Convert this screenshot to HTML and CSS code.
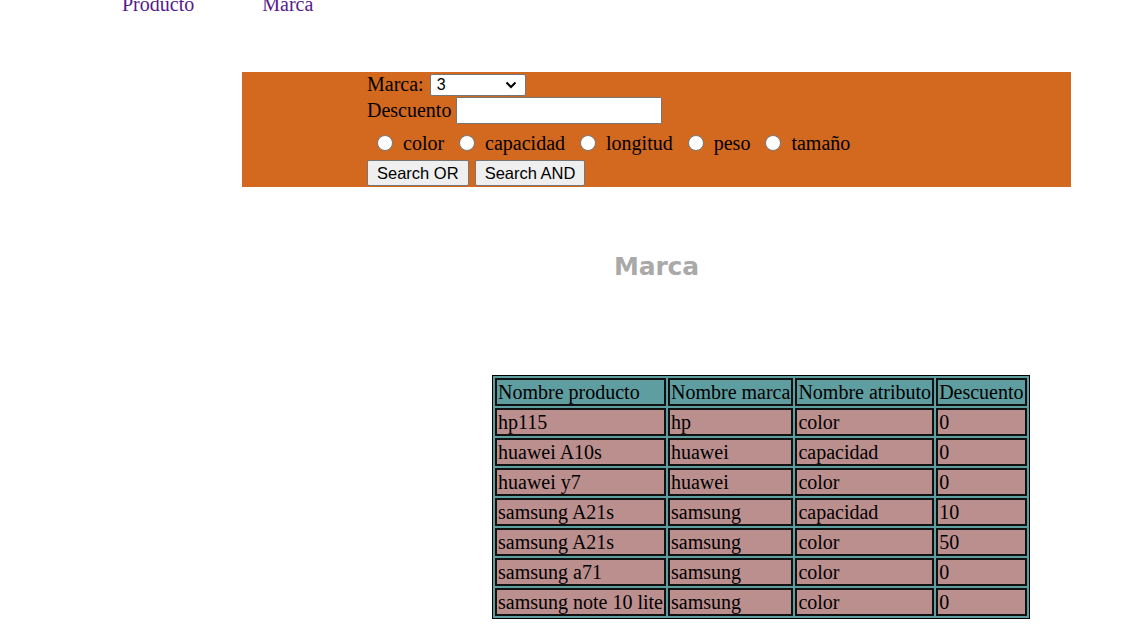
FILE: index.html
```html
<!DOCTYPE html>
<html>
<head>
<meta charset="utf-8">
<link rel="stylesheet" href="styles.css">
</head>
<body>
<nav class="nav">
  <a class="nav-link" href="#">Producto</a>
  <a class="nav-link nav-link-2" href="#">Marca</a>
</nav>
<main class="main">
  <form class="filter">
    <div class="row row-marca">
      <label class="lbl">Marca:</label>
      <div class="select"><span>3</span><svg width="12" height="8" viewBox="0 0 12 8"><path d="M1.5 1.5 L6 6 L10.5 1.5" fill="none" stroke="#000" stroke-width="2"/></svg></div>
    </div>
    <div class="row row-desc">
      <label class="lbl">Descuento</label>
      <div class="input"></div>
    </div>
    <div class="row row-radios">
      <span class="radio radio-first"></span><span class="rlabel">color</span>
      <span class="radio"></span><span class="rlabel">capacidad</span>
      <span class="radio"></span><span class="rlabel">longitud</span>
      <span class="radio"></span><span class="rlabel">peso</span>
      <span class="radio"></span><span class="rlabel">tamaño</span>
    </div>
    <div class="row row-btns">
      <button type="button" class="btn btn-or">Search OR</button>
      <button type="button" class="btn btn-and">Search AND</button>
    </div>
  </form>
  <h2 class="title">Marca</h2>
  <table class="tbl">
    <tr class="head"><th>Nombre producto</th><th>Nombre marca</th><th>Nombre atributo</th><th>Descuento</th></tr>
    <tr><td>hp115</td><td>hp</td><td>color</td><td>0</td></tr>
    <tr><td>huawei A10s</td><td>huawei</td><td>capacidad</td><td>0</td></tr>
    <tr><td>huawei y7</td><td>huawei</td><td>color</td><td>0</td></tr>
    <tr><td>samsung A21s</td><td>samsung</td><td>capacidad</td><td>10</td></tr>
    <tr><td>samsung A21s</td><td>samsung</td><td>color</td><td>50</td></tr>
    <tr><td>samsung a71</td><td>samsung</td><td>color</td><td>0</td></tr>
    <tr><td>samsung note 10 lite</td><td>samsung</td><td>color</td><td>0</td></tr>
  </table>
</main>
</body>
</html>
```
FILE: styles.css
```css
html, body {
  margin: 0;
  padding: 0;
  background: #fff;
}
body {
  font-family: "Liberation Serif", "Times New Roman", serif;
  font-size: 20px;
  color: #000;
  overflow: hidden;
}
.nav {
  display: flex;
  margin-top: -7px;
  padding-left: 122px;
  height: 23px;
  line-height: 23px;
}
.nav-link {
  color: #551a8b;
  text-decoration: none;
}
.nav-link-2 {
  margin-left: 68px;
}
.main {
  margin: 56px 50px 0 242px;
}
.filter {
  background: #d2691e;
  padding-left: 125px;
  height: 115px;
  display: flex;
  flex-direction: column;
}
.row {
  display: flex;
  align-items: center;
}
.row-marca {
  height: 24px;
}
.row-marca .lbl {
  margin-right: 6px;
}
.select {
  box-sizing: border-box;
  width: 96px;
  height: 22px;
  margin-top: 2px;
  background: #fff;
  border: 1px solid #767676;
  border-radius: 2px;
  display: flex;
  align-items: center;
  justify-content: space-between;
  padding: 0 8px 0 6px;
  font-family: "Liberation Sans", Arial, sans-serif;
  font-size: 16px;
}
.row-desc {
  height: 28px;
}
.row-desc .lbl {
  margin-right: 5px;
}
.input {
  box-sizing: border-box;
  width: 206px;
  height: 27px;
  background: #fff;
  border: 1px solid #767676;
  border-radius: 1px;
}
.row-radios {
  height: 36px;
  padding-top: 2px;
  box-sizing: border-box;
}
.radio {
  box-sizing: border-box;
  width: 16px;
  height: 16px;
  border-radius: 50%;
  background: #fff;
  border: 1px solid #767676;
  margin: 0 10px 0 15px;
}
.radio-first {
  margin-left: 10px;
}
.row-btns {
  height: 27px;
  align-items: flex-start;
}
.btn {
  box-sizing: border-box;
  height: 26px;
  font-family: "Liberation Sans", Arial, sans-serif;
  font-size: 16.5px;
  color: #000;
  background: #efefef;
  border: 1px solid #767676;
  border-radius: 2px;
  padding: 0 9px;
  margin: 0 6px 0 0;
}
.title {
  margin: 0;
  height: 188px;
  padding-top: 65px;
  box-sizing: border-box;
  text-align: center;
  font-family: "DejaVu Sans", Verdana, sans-serif;
  font-weight: bold;
  font-size: 25px;
  line-height: 30px;
  color: #a9a9a9;
  letter-spacing: -0.2px;
}
.tbl {
  margin-left: 250px;
  background: #5f9ea0;
  border: 1px solid #000;
  border-spacing: 2px;
}
.tbl th, .tbl td {
  border: 2px solid #111;
  padding: 1px;
  font-weight: normal;
  text-align: left;
  line-height: 22px;
}
.tbl td {
  background: #bc8f8f;
}
.tbl th {
  background: #5f9ea0;
}
```
